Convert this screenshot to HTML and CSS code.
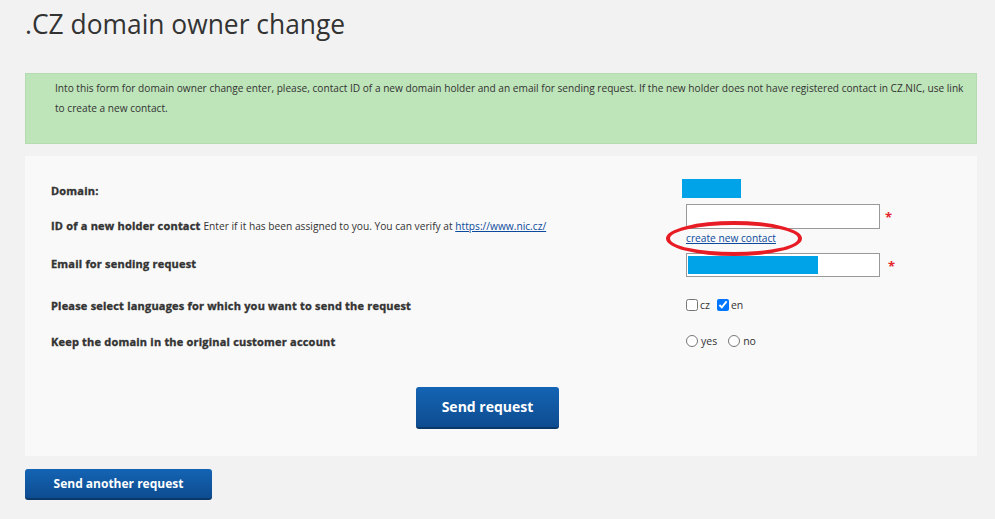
FILE: index.html
```html
<!DOCTYPE html>
<html>
<head>
<meta charset="UTF-8" /><title>.CZ domain owner change</title>
<link rel="stylesheet" href="styles.css">
</head>
<body>
<h1 class="title">.CZ domain owner change</h1>

<div class="info">
	Into this form for domain owner change enter, please, contact ID of a new domain holder and an email for sending request. If the new holder does not have registered contact in CZ.NIC, use link to create a new contact.
</div>

<div class="panel">
	<div class="row r-domain">
		<div class="label"><b>Domain:</b></div>
		<div class="value"><span class="masked domain"></span></div>
	</div>
	<div class="row r-contact">
		<div class="label"><b>ID of a new holder contact</b> <span class="hint">Enter if it has been assigned to you. You can verify at <a href="#">https://www.nic.cz/</a></span></div>
		<div class="value">
			<div class="field"><input type="text" class="text"><span class="req">*</span></div>
			<div class="newlink"><a href="#">create new contact</a><span class="circle"></span></div>
		</div>
	</div>
	<div class="row r-email">
		<div class="label"><b>Email for sending request</b></div>
		<div class="value">
			<div class="field"><span class="text filled"><span class="masked email"></span></span><span class="req req2">*</span></div>
		</div>
	</div>
	<div class="row r-lang">
		<div class="label"><b>Please select languages for which you want to send the request</b></div>
		<div class="value opts">
			<label><input type="checkbox">cz</label>
			<label><input type="checkbox" checked>en</label>
		</div>
	</div>
	<div class="row r-keep">
		<div class="label"><b>Keep the domain in the original customer account</b></div>
		<div class="value opts radios">
			<label><input type="radio" name="keep">yes</label>
			<label><input type="radio" name="keep">no</label>
		</div>
	</div>
	<div class="actions">
		<span class="button big">Send request</span>
	</div>
</div>

<div class="after">
	<span class="button small">Send another request</span>
</div>
</body>
</html>
```

FILE: styles.css
```css
* {
	padding: 0px;
	margin: 0px;
	box-sizing: border-box;
}
body {
	font: 11px "Open Sans", "DejaVu Sans", sans-serif;
	color: #333;
	background: #f2f2f2;
	padding: 0 18px 0 25px;
}
.title {
	font-size: 26.4px;
	font-weight: normal;
	color: #333;
	line-height: 36px;
	padding-top: 6px;
	height: 73px;
}

/* info box */
.info {
	background: #bee4b9;
	border: 1px solid #b5dcb0;
	padding: 4px 4px 18px 29px;
	line-height: 20px;
	height: 71px;
	font-size: 10.15px;
}

/* form panel */
.panel {
	background: #f9f9f9;
	margin-top: 12px;
	padding: 23px 26px 27px 26px;
}
.row {
	display: flex;
	align-items: center;
}
.label {
	width: 631px;
	flex: none;
}
.label b {
	font-weight: bold;
	letter-spacing: 0.2px;
	-webkit-text-stroke: 0.35px #333;
}
.hint {
	font-size: 10.2px;
}
.label a {
	color: #0b4a9c;
}
.value {
	flex: 1;
}
.r-domain { height: 19px; }
.r-domain .label { padding-top: 4px; }
.r-contact { height: 41px; margin-top: 7px; }
.r-email { height: 24px; margin-top: 7px; }
.r-email .label { padding-bottom: 3px; }
.r-lang { height: 24px; margin-top: 16px; }
.r-keep { height: 24px; margin-top: 12px; }

.masked {
	display: inline-block;
	background: #00a3e8;
}
.masked.domain {
	width: 59px;
	height: 19px;
	vertical-align: top;
}
.masked.email {
	width: 130px;
	height: 18px;
	margin: 2px 0 0 1px;
}
.field {
	display: flex;
	align-items: center;
	padding-left: 4px;
}
.text {
	display: block;
	width: 194px;
	height: 25px;
	border: 1px solid #999;
	background: #fff;
	font: inherit;
	outline: none;
}
.filled {
	height: 24px;
}
.req {
	color: #e4262a;
	font-size: 13px;
	font-weight: bold;
	margin-left: 5px;
	line-height: 13px;
	margin-top: 2px;
}
.req2 {
	margin-left: 8px;
}
.newlink {
	position: relative;
	padding-left: 4px;
	line-height: 18px;
	font-size: 10.2px;
}
.newlink a {
	color: #0b4a9c;
}
.circle {
	position: absolute;
	left: -16px;
	top: -8px;
	width: 136px;
	height: 35px;
	border: 4px solid #e81c24;
	border-radius: 50%;
}

.opts {
	display: flex;
	align-items: center;
	padding-left: 4px;
	font-size: 10.5px;
}
.opts label {
	display: flex;
	align-items: center;
	margin-right: 7px;
}
.radios label {
	margin-right: 11px;
}
.opts input {
	margin: 0 2px 0 0;
	width: 12px;
	height: 12px;
}
.radios input {
	margin-right: 3px;
}

/* buttons */
.actions {
	margin-top: 34px;
	padding-left: 365px;
}
.button {
	display: inline-block;
	color: #fff;
	font-weight: bold;
	text-align: center;
	border-radius: 3px;
	background: linear-gradient(#1464b4, #0e4c90);
	border-bottom: 2px solid #0a3868;
}
.big {
	width: 143px;
	height: 42px;
	line-height: 40px;
	font-size: 14px;
}
.after {
	margin-top: 13px;
}
.small {
	width: 187px;
	height: 31px;
	line-height: 30px;
	font-size: 12px;
}
```
